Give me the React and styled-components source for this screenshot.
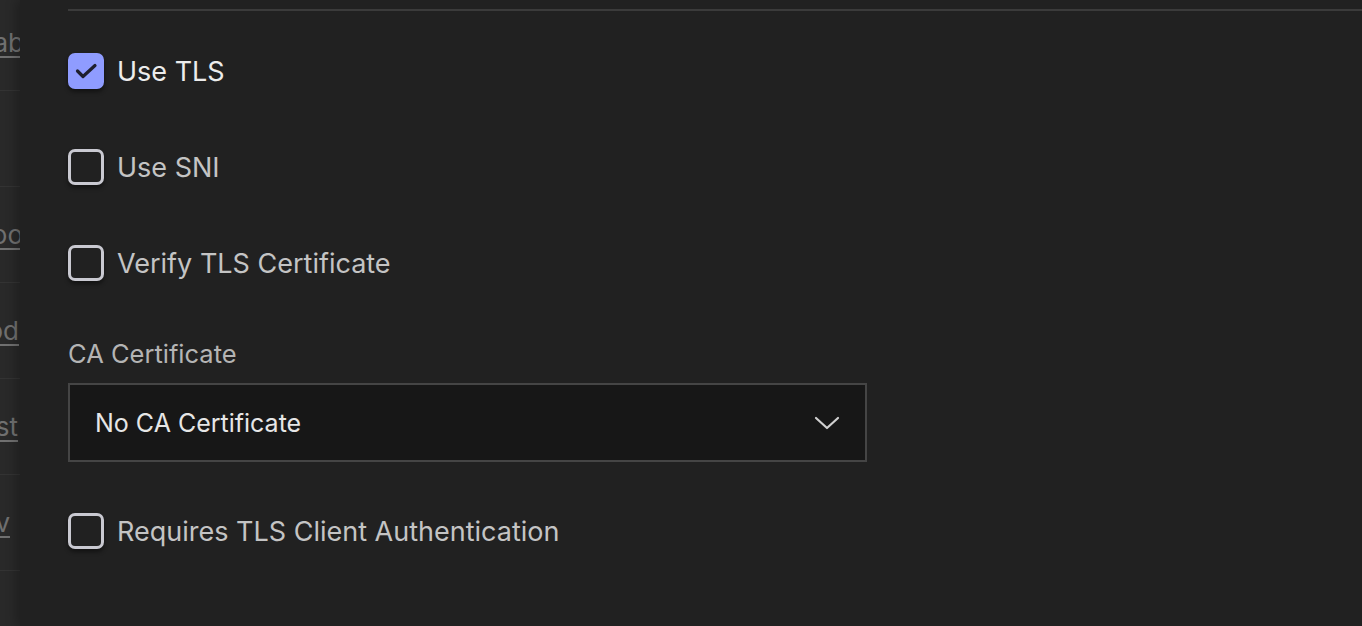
import React from "react";
import styled, { createGlobalStyle } from "styled-components";

const Global = createGlobalStyle`
  html, body { margin: 0; padding: 0; background: #212121; overflow: hidden; }
  body { font-family: Inter, "Noto Sans", "Liberation Sans", sans-serif; }
  * { box-sizing: border-box; }
`;

const Page = styled.div`
  display: flex;
  width: 1362px;
  height: 626px;
  overflow: hidden;
`;

const Behind = styled.div`
  width: 20px;
  flex: none;
  overflow: hidden;
  background: #292929;
  display: flex;
  flex-direction: column;
`;

const BgRow = styled.div`
  height: 96px;
  flex: none;
  border-bottom: 1px solid #333333;
  display: flex;
  align-items: center;
  justify-content: flex-end;
  padding-right: ${(p) => p.$end}px;
  margin-top: ${(p) => (p.$first ? -5 : 0)}px;
`;

const BgLink = styled.span`
  font-size: 26px;
  color: #707070;
  text-decoration: underline;
  text-underline-offset: 4px;
  white-space: nowrap;
  margin-right: ${(p) => p.$shift}px;
`;

const Panel = styled.div`
  flex: 1;
  background: #212121;
  box-shadow: -4px 0 10px rgba(0, 0, 0, 0.25);
  padding-left: 48px;
  display: flex;
  flex-direction: column;
`;

const TopRule = styled.div`
  height: 2px;
  margin-top: 9px;
  background: #3b3b3b;
`;

const Form = styled.div`
  display: flex;
  flex-direction: column;
  padding-top: 42px;
`;

const CheckRow = styled.label`
  display: flex;
  align-items: center;
  gap: 13px;
  height: 36px;
  margin-bottom: ${(p) => p.$mb}px;
  cursor: pointer;
`;

const Box = styled.span`
  width: 36px;
  height: 36px;
  flex: none;
  border-radius: 7px;
  border: 3px solid ${(p) => (p.$checked ? "#8f9cff" : "#c9c9d1")};
  background: ${(p) => (p.$checked ? "#8f9cff" : "transparent")};
  box-shadow: 0 3px 4px rgba(0, 0, 0, 0.45);
  display: flex;
  align-items: center;
  justify-content: center;
`;

const LabelText = styled.span`
  font-size: 27px;
  color: ${(p) => (p.$checked ? "#ececec" : "#c4c4c4")};
  white-space: nowrap;
`;

const FieldLabel = styled.div`
  font-size: 25.5px;
  color: #b4b4b4;
  line-height: 30px;
  margin-bottom: 14px;
`;

const Select = styled.div`
  width: 799px;
  height: 79px;
  border: 2px solid #454545;
  background: #171717;
  display: flex;
  align-items: center;
  justify-content: space-between;
  padding: 0 25px;
  margin-bottom: 51px;
`;

const SelectText = styled.span`
  font-size: 25px;
  color: #e6e6e6;
`;

const Check = () => (
  <svg width="24" height="24" viewBox="0 0 24 24" fill="none">
    <path d="M3.5 12l5.5 5.5L21 6.5" stroke="#1e1f2e" strokeWidth="3.2" strokeLinecap="round" strokeLinejoin="round" />
  </svg>
);

const Chevron = () => (
  <svg width="26" height="16" viewBox="0 0 26 16" fill="none">
    <path d="M2 3l11 10L24 3" stroke="#d0d0d0" strokeWidth="2.2" strokeLinecap="round" strokeLinejoin="round" />
  </svg>
);

const Checkbox = ({ checked, label, mb }) => (
  <CheckRow $mb={mb}>
    <Box $checked={checked}>{checked && <Check />}</Box>
    <LabelText $checked={checked}>{label}</LabelText>
  </CheckRow>
);

const bgRows = [
  { text: "Tab", shift: -4, end: 0 },
  { text: "", shift: 0, end: 0 },
  { text: "Foo", shift: -3, end: 0 },
  { text: "Prod", shift: 0, end: 1 },
  { text: "Test", shift: 0, end: 2 },
  { text: "Dev", shift: 0, end: 10 },
  { text: "", shift: 0, end: 0 },
];

export default function App() {
  return (
    <>
      <Global />
      <Page>
        <Behind>
          {bgRows.map((r, i) => (
            <BgRow key={i} $end={r.end} $first={i === 0}>
              {r.text && <BgLink $shift={r.shift}>{r.text}</BgLink>}
            </BgRow>
          ))}
        </Behind>
        <Panel>
          <TopRule />
          <Form>
            <Checkbox checked label="Use TLS" mb={60} />
            <Checkbox label="Use SNI" mb={60} />
            <Checkbox label="Verify TLS Certificate" mb={58} />
            <FieldLabel>CA Certificate</FieldLabel>
            <Select>
              <SelectText>No CA Certificate</SelectText>
              <Chevron />
            </Select>
            <Checkbox label="Requires TLS Client Authentication" mb={0} />
          </Form>
        </Panel>
      </Page>
    </>
  );
}
